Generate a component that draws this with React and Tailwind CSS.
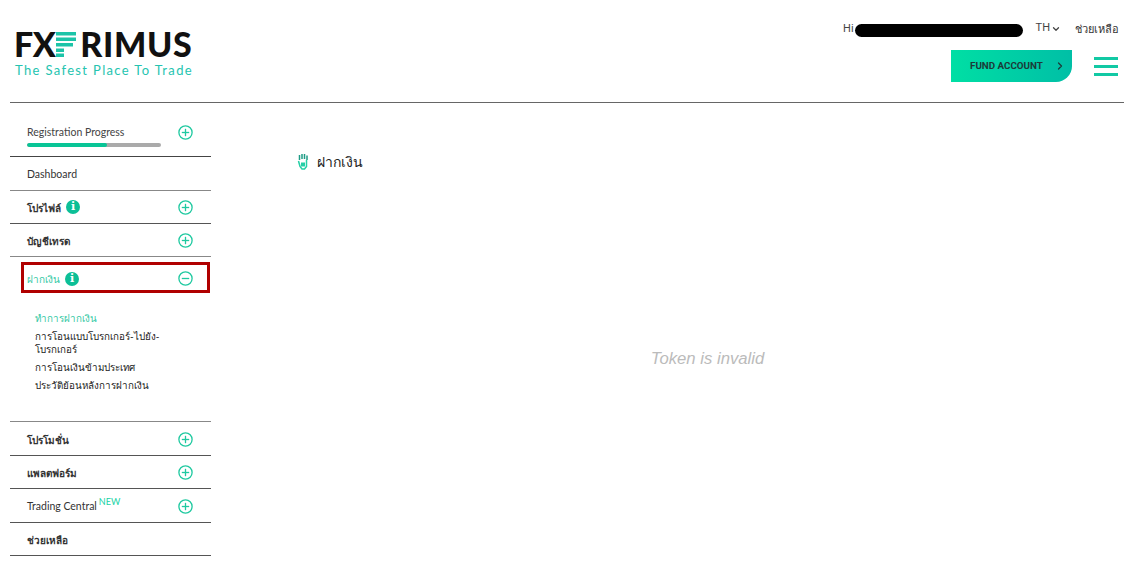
import React from 'react';
import { ChevronDown, ChevronRight } from 'lucide-react';

function Toggle({ open, className = '' }) {
  return (
    <svg width="15" height="15" viewBox="0 0 15 15" fill="none" stroke="#1fc9a0" strokeWidth="1.3" className={`shrink-0 ${className}`}>
      <circle cx="7.5" cy="7.5" r="6.6" />
      <path d="M3.8 7.5h7.4" />
      {!open && <path d="M7.5 3.8v7.4" />}
    </svg>
  );
}

function InfoDot() {
  return (
    <span className="w-[14px] h-[14px] rounded-full bg-[#0cbf97] text-white text-[11px] leading-[14px] font-bold text-center font-['DejaVu_Serif',serif]">i</span>
  );
}

function Row({ label, info, toggle, thai, h = 'h-[33px]', border = 'border-[#555]', children }) {
  return (
    <div className={`${h} border-b ${border} flex items-center justify-between pl-[17px] pr-[18px]`}>
      <div className={`flex items-center gap-[5px] text-[#333] ${thai ? 'text-[10px] font-semibold' : 'text-[10.5px]'}`}>
        <span className="pt-[2px]">{label}</span>
        {info && <InfoDot />}
        {children}
      </div>
      {toggle && <Toggle />}
    </div>
  );
}

export default function App() {
  return (
    <div className="w-[1136px] h-[581px] overflow-hidden bg-white pl-[10px] pr-[12px] font-['Lato','Noto_Sans',sans-serif]">
      <header className="h-[103px] border-b border-[#666] flex justify-between">
        <div className="pl-[5px] pt-[25px]">
          <div className="flex items-center h-[38px] -ml-[1px] text-[34px] font-black text-[#111] leading-none">
            <span className="tracking-[-0.6px]">FX</span>
            <svg width="20" height="25" viewBox="0 0 20 25" className="ml-[1px] mr-[4px]" fill="#1cc4a8">
              <rect x="0" y="0" width="20" height="3.5" />
              <rect x="0" y="5.5" width="20" height="3.5" />
              <rect x="0" y="11" width="17" height="3.5" />
              <rect x="0" y="16.5" width="8" height="3.5" />
              <rect x="0" y="21.5" width="8" height="3.5" />
            </svg>
            <span className="tracking-[0.7px]">RIMUS</span>
          </div>
          <div className="-mt-[1px] text-[13px] leading-[16px] tracking-[1.35px] text-[#25c4b0]">The Safest Place To Trade</div>
        </div>
        <div className="flex flex-col items-end pr-[5px] pt-[18px] font-['Roboto',sans-serif]">
          <div className="flex items-center h-[22px] text-[11px] text-[#444]">
            <span>Hi</span>
            <span className="ml-[1px] w-[168px] h-[13px] rounded-full bg-black mt-[3px]" />
            <span className="ml-[13px] -mt-[1px]">TH</span>
            <ChevronDown size={10} strokeWidth={3} className="ml-[1px] -mt-[1px]" />
            <span className="ml-[14px] text-[#333] font-['Noto_Sans',sans-serif]">ช่วยเหลือ</span>
          </div>
          <div className="flex items-center mt-[10px] mr-[1px]">
            <button className="w-[121px] h-[32px] bg-gradient-to-r from-[#00dfa4] to-[#00bfa6] rounded-br-[16px] flex items-center justify-between pl-[19px] pr-[6px] text-[9.8px] font-bold text-[#1c3a38]">
              <span>FUND ACCOUNT</span>
              <ChevronRight size={12} strokeWidth={2.5} />
            </button>
            <div className="ml-[22px] flex flex-col gap-[5px] w-[24px]">
              <span className="h-[3px] bg-[#12c9a4]" />
              <span className="h-[3px] bg-[#12c9a4]" />
              <span className="h-[3px] bg-[#12c9a4]" />
            </div>
          </div>
        </div>
      </header>

      <div className="flex">
        <aside className="w-[201px] shrink-0">
          <div className="h-[54px] border-b border-[#444] pl-[17px] pr-[18px] pt-[22px]">
            <div className="flex items-center justify-between h-[15px] text-[10.5px] text-[#444]">
              <span>Registration Progress</span>
              <Toggle className="-mt-[1px]" />
            </div>
            <div className="mt-[3px] w-[134px] h-[4px] rounded-full bg-[#aaa] overflow-hidden">
              <div className="w-[80px] h-full bg-[#08c596] rounded-full" />
            </div>
          </div>
          <Row label="Dashboard" h="h-[34px]" border="border-[#888]" />
          <Row label="โปรไฟล์" thai info toggle />
          <Row label="บัญชีเทรด" thai toggle border="border-[#888]" />

          <div className="h-[165px] border-b border-[#888] pt-[5px]">
            <div className="ml-[11px] mr-[1px] h-[31px] border-[3px] border-[#b00000] flex items-center justify-between pt-[2px] pl-[3px] pr-[14px]">
              <div className="flex items-center gap-[5px] text-[10px] font-medium text-[#35c9a5]">
                <span className="pt-[2px]">ฝากเงิน</span>
                <InfoDot />
              </div>
              <Toggle open />
            </div>
            <ul className="mt-[19px] pl-[25px] pr-[40px] text-[9.8px] font-medium leading-[13px] text-[#222] flex flex-col gap-[5px]">
              <li className="text-[#35c9a5]">ทำการฝากเงิน</li>
              <li>การโอนแบบโบรกเกอร์-ไปยัง-โบรกเกอร์</li>
              <li>การโอนเงินข้ามประเทศ</li>
              <li>ประวัติย้อนหลังการฝากเงิน</li>
            </ul>
          </div>

          <Row label="โปรโมชั่น" thai toggle h="h-[34px] pt-[1px]" />
          <Row label="แพลตฟอร์ม" thai toggle />
          <Row label="Trading Central" toggle h="h-[34px] pt-[1px]">
            <sup className="-ml-[3px] mt-[1px] text-[9px] text-[#18d3a6]">NEW</sup>
          </Row>
          <Row label="ช่วยเหลือ" thai />
        </aside>

        <main className="flex-1">
          <div className="ml-[86px] mt-[48px] flex items-center gap-[8px] h-[20px]">
            <svg width="12" height="17" viewBox="0 0 12 17" fill="none" stroke="#25cfa6" strokeWidth="1.5">
              <path d="M2.5 7V2M5 6V1M7.5 6V1M10 7V2.5" stroke="#1f9c86" />
              <path d="M1.5 8l1.5 5.5 2 2.5h2.5l2-2.5V7" />
              <path d="M4 9.5h4v4H4z" fill="#25cfa6" stroke="none" />
            </svg>
            <h1 className="text-[14px] text-[#222]">ฝากเงิน</h1>
          </div>
          <p className="text-center mt-[175px] pl-[80px] text-[16.7px] italic text-[#bbb] font-['Liberation_Sans',sans-serif]">Token is invalid</p>
        </main>
      </div>
    </div>
  );
}
